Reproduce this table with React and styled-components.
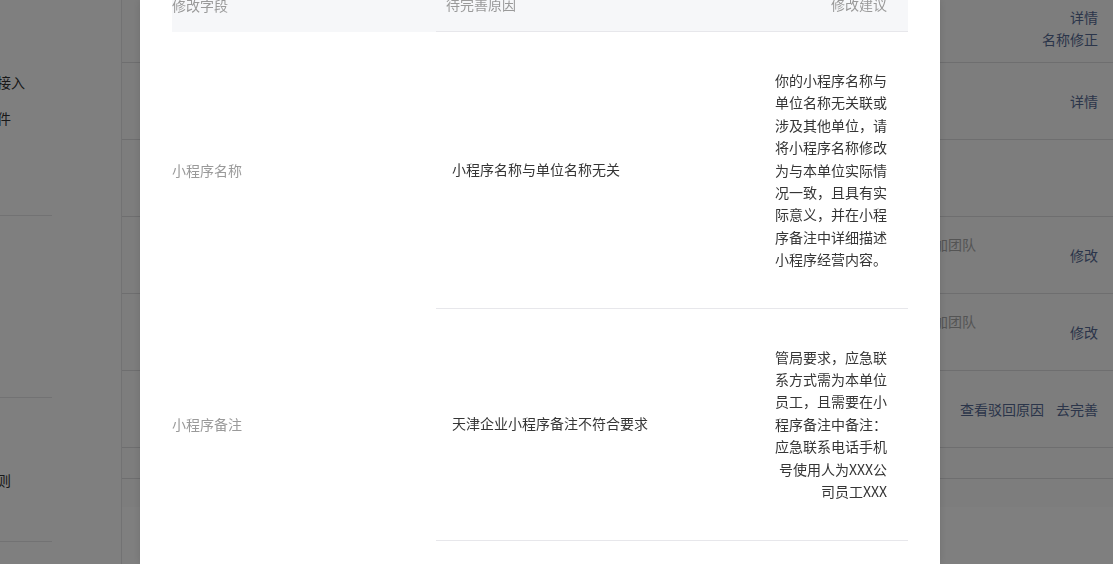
import React from "react";
import styled, { createGlobalStyle } from "styled-components";

const GlobalStyle = createGlobalStyle`
  html, body {
    margin: 0;
    padding: 0;
    height: 100%;
    overflow: hidden;
  }
  body {
    background: #ffffff;
    font-family: "Noto Sans CJK SC", "Noto Sans", sans-serif;
    font-size: 14px;
    color: #353535;
  }
`;

const rows = [
  { field: "小程序名称", reason: "小程序名称与单位名称无关", advice: "你的小程序名称与单位名称无关联或涉及其他单位，请将小程序名称修改为与本单位实际情况一致，且具有实际意义，并在小程序备注中详细描述小程序经营内容。" },
  { field: "小程序备注", reason: "天津企业小程序备注不符合要求", advice: "管局要求，应急联系方式需为本单位员工，且需要在小程序备注中备注：应急联系电话手机号使用人为XXX公司员工XXX" },
];

const listRows = [
  { height: 63, actions: [["详情"], ["名称修正"]], top: true },
  { height: 77, actions: [["详情"]] },
  { height: 77, actions: [] },
  { height: 77, status: ["需要添加团队", "成员"], actions: [["修改"]] },
  { height: 77, status: ["需要添加团队", "成员"], actions: [["修改"]] },
  { height: 77, actions: [["查看驳回原因", "去完善"]] },
  { height: 31, actions: [] },
];

class App extends React.Component {
  render() {
    return (
      <>
        <GlobalStyle />
        <Page>
          <Sidebar>
            <NavGroup height={216}>
              <NavItem shift={-31}>服务接入</NavItem>
              <NavItem shift={-17}>插件</NavItem>
            </NavGroup>
            <NavGroup height={182} />
            <NavGroup height={144}>
              <NavItem shift={-17}>规则</NavItem>
            </NavGroup>
          </Sidebar>
          <Main>
            <List>
              {listRows.map((row, i) => (
                <ListRow key={i} height={row.height} top={row.top}>
                  <Status>
                    {row.status && row.status.map((s) => <div key={s}>{s}</div>)}
                  </Status>
                  <Actions>
                    {row.actions.map((line, j) => (
                      <ActionLine key={j}>
                        {line.map((a) => (
                          <Link key={a}>{a}</Link>
                        ))}
                      </ActionLine>
                    ))}
                  </Actions>
                </ListRow>
              ))}
            </List>
          </Main>
        </Page>
        <Mask />
        <Dialog>
          <Table>
            <HeadCell plain>修改字段</HeadCell>
            <HeadCell>待完善原因</HeadCell>
            <HeadCell right>修改建议</HeadCell>
            {rows.map((r) => (
              <React.Fragment key={r.field}>
                <FieldCell>{r.field}</FieldCell>
                <ReasonCell>{r.reason}</ReasonCell>
                <AdviceCell>
                  <AdviceText>{r.advice}</AdviceText>
                </AdviceCell>
              </React.Fragment>
            ))}
            <FieldCell />
            <ReasonCell />
            <AdviceCell />
          </Table>
        </Dialog>
      </>
    );
  }
}

const Page = styled.div`
  display: flex;
  width: 1113px;
  height: 564px;
  overflow: hidden;
  background: #ffffff;
`;

const Sidebar = styled.div`
  width: 121px;
  flex-shrink: 0;
  border-right: 1px solid #e4e4e6;
  display: flex;
  flex-direction: column;
`;

const NavGroup = styled.div`
  width: 52px;
  height: ${(p) => p.height}px;
  box-sizing: border-box;
  padding-top: 64px;
  border-bottom: 1px solid #e4e4e6;
  flex-shrink: 0;
`;

const NavItem = styled.div`
  height: 36px;
  line-height: 36px;
  white-space: nowrap;
  margin-left: ${(p) => p.shift}px;
  color: #333333;
`;

const Main = styled.div`
  flex: 1;
  min-width: 0;
  display: flex;
  flex-direction: column;
`;

const List = styled.div`
  background: #fafafa;
  padding-bottom: 28px;
`;

const ListRow = styled.div`
  height: ${(p) => p.height}px;
  box-sizing: border-box;
  border-bottom: 1px solid #dcdcde;
  display: grid;
  grid-template-columns: 770px 1fr;
  align-items: ${(p) => (p.top ? "start" : "center")};
  padding-top: ${(p) => (p.top ? 6 : 0)}px;
`;

const Status = styled.div`
  grid-row: 1;
  grid-column: 2;
  line-height: 22px;
  color: #a9a9a9;
  white-space: nowrap;
`;

const Actions = styled.div`
  grid-row: 1;
  grid-column: 2;
  justify-self: end;
  display: flex;
  flex-direction: column;
  align-items: flex-end;
  padding-right: 15px;
  line-height: 22px;
`;

const ActionLine = styled.div`
  display: flex;
  gap: 12px;
`;

const Link = styled.span`
  color: #576b95;
  white-space: nowrap;
`;

const Mask = styled.div`
  position: fixed;
  inset: 0;
  background: rgba(0, 0, 0, 0.5);
`;

const Dialog = styled.div`
  position: fixed;
  top: 0;
  left: 140px;
  width: 800px;
  height: 564px;
  background: #ffffff;
  box-shadow: 0 0 8px rgba(0, 0, 0, 0.12);
  overflow: hidden;
  padding: 0 32px;
  box-sizing: border-box;
`;

const Table = styled.div`
  display: grid;
  grid-template-columns: 264px 318px 154px;
  margin-top: -18px;
`;

const HeadCell = styled.div`
  height: 50px;
  box-sizing: border-box;
  background: #f6f7f9;
  color: #9a9a9a;
  display: flex;
  align-items: center;
  padding: 0 ${(p) => (p.right ? "21px" : "0")} 5px ${(p) => (p.plain ? "0" : "10px")};
  justify-content: ${(p) => (p.right ? "flex-end" : "flex-start")};
  border-bottom: ${(p) => (p.plain ? "none" : "1px solid #e7e7eb")};
`;

const FieldCell = styled.div`
  display: flex;
  align-items: center;
  color: #9a9a9a;
  line-height: 22.4px;
  padding-bottom: 1px;
`;

const ReasonCell = styled.div`
  display: flex;
  align-items: center;
  padding-left: 16px;
  padding-bottom: 1px;
  color: #353535;
  border-bottom: 1px solid #e7e7eb;
  line-height: 22.4px;
`;

const AdviceCell = styled.div`
  display: flex;
  justify-content: flex-end;
  align-items: center;
  padding: 37px 21px 37px 20px;
  border-bottom: 1px solid #e7e7eb;
  min-height: 60px;
`;

const AdviceText = styled.div`
  width: 113px;
  text-align: right;
  line-height: 22.4px;
  color: #353535;
`;

export default App;
